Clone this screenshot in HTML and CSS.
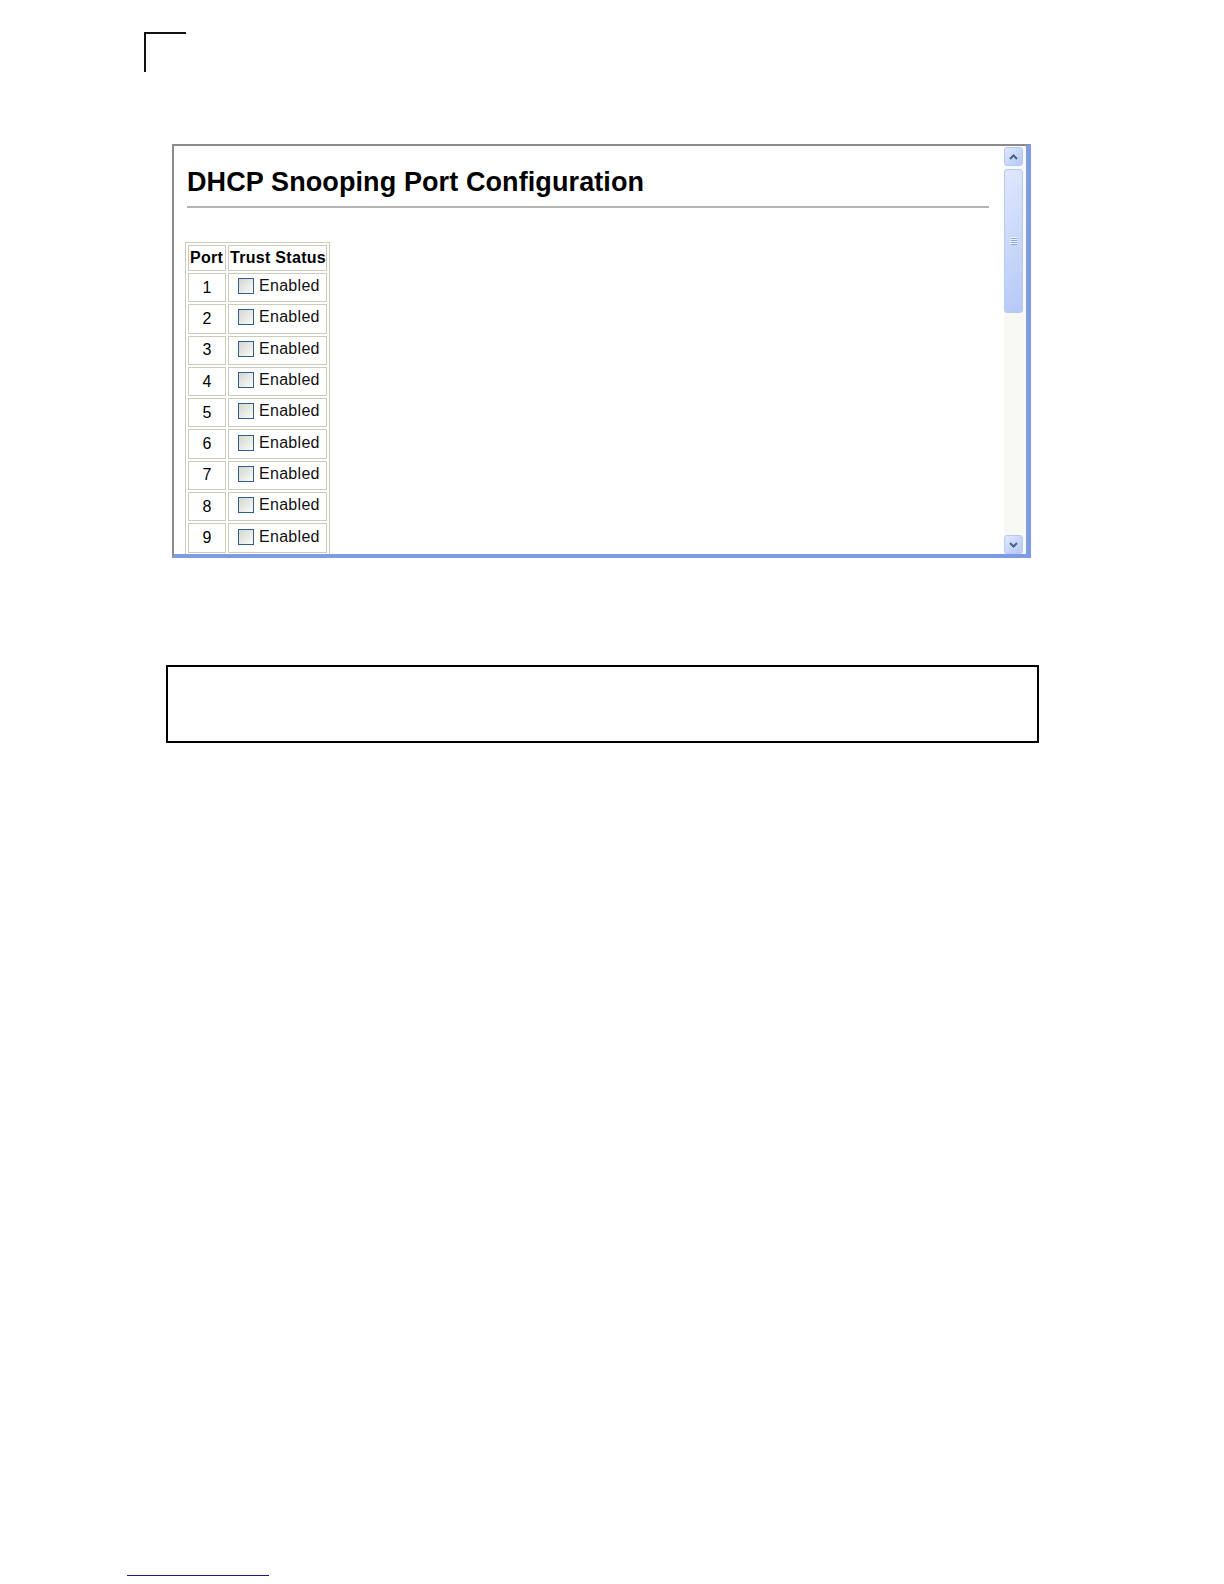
FILE: index.html
```html
<!DOCTYPE html>
<html lang="en">
<head>
    <meta charset="UTF-8">
    <meta name="viewport" content="width=device-width, initial-scale=1.0">
    <title>DHCP Snooping Port Configuration</title>
    <link rel="stylesheet" href="styles.css">
</head>
<body>
<div class="page">
    <div class="corner"></div>

    <!-- Browser frame with the config page -->
    <div class="frame">
        <div class="frame-body">
            <h1 class="title">DHCP Snooping Port Configuration</h1>
            <div class="rule"></div>
            <table class="ports">
                <tr class="head">
                    <th class="col-port">Port</th>
                    <th class="col-trust">Trust Status</th>
                </tr>
                <tr><td class="num">1</td><td class="trust"><span class="check"><span class="box"></span>Enabled</span></td></tr>
                <tr><td class="num">2</td><td class="trust"><span class="check"><span class="box"></span>Enabled</span></td></tr>
                <tr><td class="num">3</td><td class="trust"><span class="check"><span class="box"></span>Enabled</span></td></tr>
                <tr><td class="num">4</td><td class="trust"><span class="check"><span class="box"></span>Enabled</span></td></tr>
                <tr><td class="num">5</td><td class="trust"><span class="check"><span class="box"></span>Enabled</span></td></tr>
                <tr><td class="num">6</td><td class="trust"><span class="check"><span class="box"></span>Enabled</span></td></tr>
                <tr><td class="num">7</td><td class="trust"><span class="check"><span class="box"></span>Enabled</span></td></tr>
                <tr><td class="num">8</td><td class="trust"><span class="check"><span class="box"></span>Enabled</span></td></tr>
                <tr><td class="num">9</td><td class="trust"><span class="check"><span class="box"></span>Enabled</span></td></tr>
                <!-- next row is scrolled out of view -->
                <tr><td class="num"></td><td class="trust"></td></tr>
            </table>
        </div>
        <div class="scrollbar">
            <div class="sb-btn">
                <svg width="9" height="6" viewBox="0 0 9 6"><path d="M1 5 L4.5 1.5 L8 5" fill="none" stroke="#4d6185" stroke-width="2"/></svg>
            </div>
            <div class="sb-thumb">
                <svg width="7" height="8" viewBox="0 0 7 8">
                    <path d="M0 0.5 H7 M0 2.5 H7 M0 4.5 H7 M0 6.5 H7" stroke="#eef2fe" stroke-width="1"/>
                    <path d="M1 1.5 H7 M1 3.5 H7 M1 5.5 H7 M1 7.5 H7" stroke="#8ca8e8" stroke-width="1"/>
                </svg>
            </div>
            <div class="sb-track"></div>
            <div class="sb-btn down">
                <svg width="9" height="6" viewBox="0 0 9 6"><path d="M1 1 L4.5 4.5 L8 1" fill="none" stroke="#4d6185" stroke-width="2"/></svg>
            </div>
        </div>
    </div>

    <div class="note"></div>

    <div class="footer-line"></div>
</div>
</body>
</html>
```

FILE: styles.css
```css
body {
    margin: 0;
    background-color: white;
    font-family: "Liberation Sans", Arial, sans-serif;
    color: #000;
}
.page {
    display: flex;
    flex-direction: column;
    align-items: flex-start;
    min-height: 100vh;
}
.corner {
    margin: 32px 0 0 144px;
    width: 40px;
    height: 38px;
    border-top: 2px solid #111;
    border-left: 2px solid #111;
}

/* framed screenshot */
.frame {
    display: flex;
    margin: 72px 0 0 172px;
    width: 852px;
    height: 408px;
    border-top: 2px solid #8c8c8c;
    border-left: 2px solid #8c8c8c;
    border-right: 5px solid #7f9be2;
    border-bottom: 4px solid #7f9be2;
    background-color: white;
}
.frame-body {
    flex: 1;
    overflow: hidden;
    padding: 0 15px 0 12px;
}
.title {
    margin: 20px 0 0 1px;
    font-size: 27px;
    line-height: 32px;
    font-weight: bold;
    letter-spacing: 0.1px;
}
.rule {
    margin: 8px 0 0 1px;
    height: 2px;
    background-color: #b4b4b0;
}
.ports {
    margin: 34px 0 0 -1px;
    border-collapse: separate;
    border-spacing: 2px;
    border: 1px solid #cbcbbb;
    font-size: 16px;
}
.ports tr {
    height: 29.3px;
}
.ports tr.head {
    height: 26px;
}
.ports th,
.ports td {
    box-sizing: border-box;
    padding: 0;
    border: 1px solid #cbcbbb;
    vertical-align: middle;
    white-space: nowrap;
}
.ports th {
    text-align: left;
    font-weight: bold;
    letter-spacing: 0.3px;
    line-height: 18px;
    padding-left: 1px;
}
.col-port {
    width: 38px;
}
.col-trust {
    width: 99px;
}
.ports td.num {
    text-align: center;
}
.ports td.trust {
    padding-left: 9px;
}
.check {
    display: inline-flex;
    align-items: center;
    letter-spacing: 0.3px;
    color: #111;
}
.box {
    width: 14px;
    height: 14px;
    margin-right: 5px;
    border: 1px solid #2f5f8f;
    background: linear-gradient(135deg, #d6d6cf, #fbfbf8);
}

/* XP style scrollbar */
.scrollbar {
    display: flex;
    flex-direction: column;
    width: 22px;
    background-color: #f8f8f4;
}
.sb-btn,
.sb-thumb {
    box-sizing: border-box;
    display: flex;
    justify-content: center;
    align-items: center;
    margin: 1px 3px 0 0;
    border: 1px solid #b6c9f7;
    border-radius: 3px;
    background: linear-gradient(135deg, #dfe8fe, #b5c8f6);
}
.sb-btn {
    height: 19px;
}
.sb-thumb {
    margin-top: 3px;
    height: 144px;
}
.sb-track {
    flex: 1;
}

.note {
    box-sizing: border-box;
    margin: 107px 0 0 166px;
    width: 873px;
    height: 78px;
    border: 2px solid #000;
}
.footer-line {
    margin: auto 0 8px 127px;
    width: 142px;
    border-top: 1px solid #1c1c78;
}
```
